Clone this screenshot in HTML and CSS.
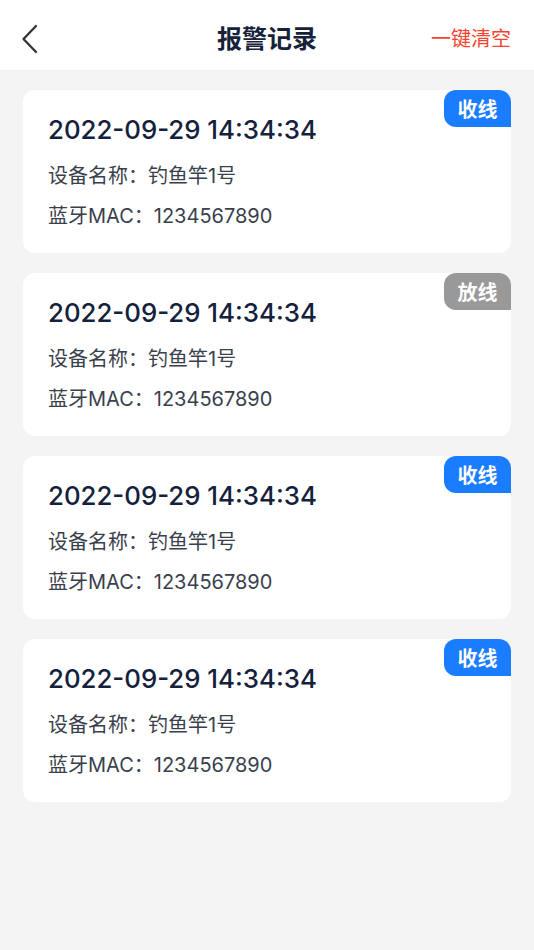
FILE: index.html
```html
<!DOCTYPE html>
<html lang="zh-CN">
<head>
<meta charset="utf-8">
<title>报警记录</title>
<link rel="stylesheet" href="styles.css">
</head>
<body>
<header class="topbar">
  <div class="back">
    <svg width="17" height="30" viewBox="0 0 17 30"><path d="M15 2 L2.5 15 L15 28" fill="none" stroke="#333" stroke-width="2.3" stroke-linecap="round" stroke-linejoin="round"/></svg>
  </div>
  <h1 class="title">报警记录</h1>
  <div class="clear">一键清空</div>
</header>
<main class="list">
  <div class="card">
    <span class="badge badge-blue">收线</span>
    <div class="time">2022-09-29 14:34:34</div>
    <div class="row">设备名称：钓鱼竿1号</div>
    <div class="row">蓝牙MAC：1234567890</div>
  </div>
  <div class="card">
    <span class="badge badge-gray">放线</span>
    <div class="time">2022-09-29 14:34:34</div>
    <div class="row">设备名称：钓鱼竿1号</div>
    <div class="row">蓝牙MAC：1234567890</div>
  </div>
  <div class="card">
    <span class="badge badge-blue">收线</span>
    <div class="time">2022-09-29 14:34:34</div>
    <div class="row">设备名称：钓鱼竿1号</div>
    <div class="row">蓝牙MAC：1234567890</div>
  </div>
  <div class="card">
    <span class="badge badge-blue">收线</span>
    <div class="time">2022-09-29 14:34:34</div>
    <div class="row">设备名称：钓鱼竿1号</div>
    <div class="row">蓝牙MAC：1234567890</div>
  </div>
</main>
</body>
</html>
```
FILE: styles.css
```css
* { box-sizing: border-box; }
html, body {
  margin: 0;
  padding: 0;
  background: #f4f4f4;
  font-family: "Inter", "Noto Sans CJK SC", sans-serif;
  width: 534px;
  min-height: 950px;
}
.topbar {
  height: 70px;
  background: #ffffff;
  display: flex;
  align-items: center;
  justify-content: space-between;
  padding: 8px 23px 0 21px;
  position: relative;
}
.back {
  width: 17px;
  height: 30px;
  display: flex;
}
.title {
  position: absolute;
  left: 0;
  right: 0;
  top: 9px;
  text-align: center;
  margin: 0;
  font-size: 25px;
  font-weight: 600;
  color: #16213a;
  line-height: 60px;
  pointer-events: none;
}
.clear {
  font-size: 20px;
  color: #f5432f;
  line-height: 60px;
}
.list {
  padding: 20px 23px;
  display: flex;
  flex-direction: column;
  gap: 20px;
}
.card {
  position: relative;
  background: #ffffff;
  border-radius: 12px;
  height: 163px;
  padding: 25px 25px 0 25px;
}
.badge {
  position: absolute;
  top: 0;
  right: 0;
  width: 67px;
  height: 37px;
  border-radius: 12px 12px 0 12px;
  color: #ffffff;
  font-size: 20px;
  font-weight: 700;
  line-height: 37px;
  text-align: center;
  font-family: "Noto Sans CJK SC", sans-serif;
}
.badge-blue { background: #1a7cff; }
.badge-gray { background: #999999; }
.time {
  font-size: 25.8px;
  line-height: 30px;
  color: #14213d;
  font-weight: 500;
  margin-bottom: 11px;
}
.row {
  font-size: 20px;
  line-height: 40px;
  color: #3a3f4d;
}
```
